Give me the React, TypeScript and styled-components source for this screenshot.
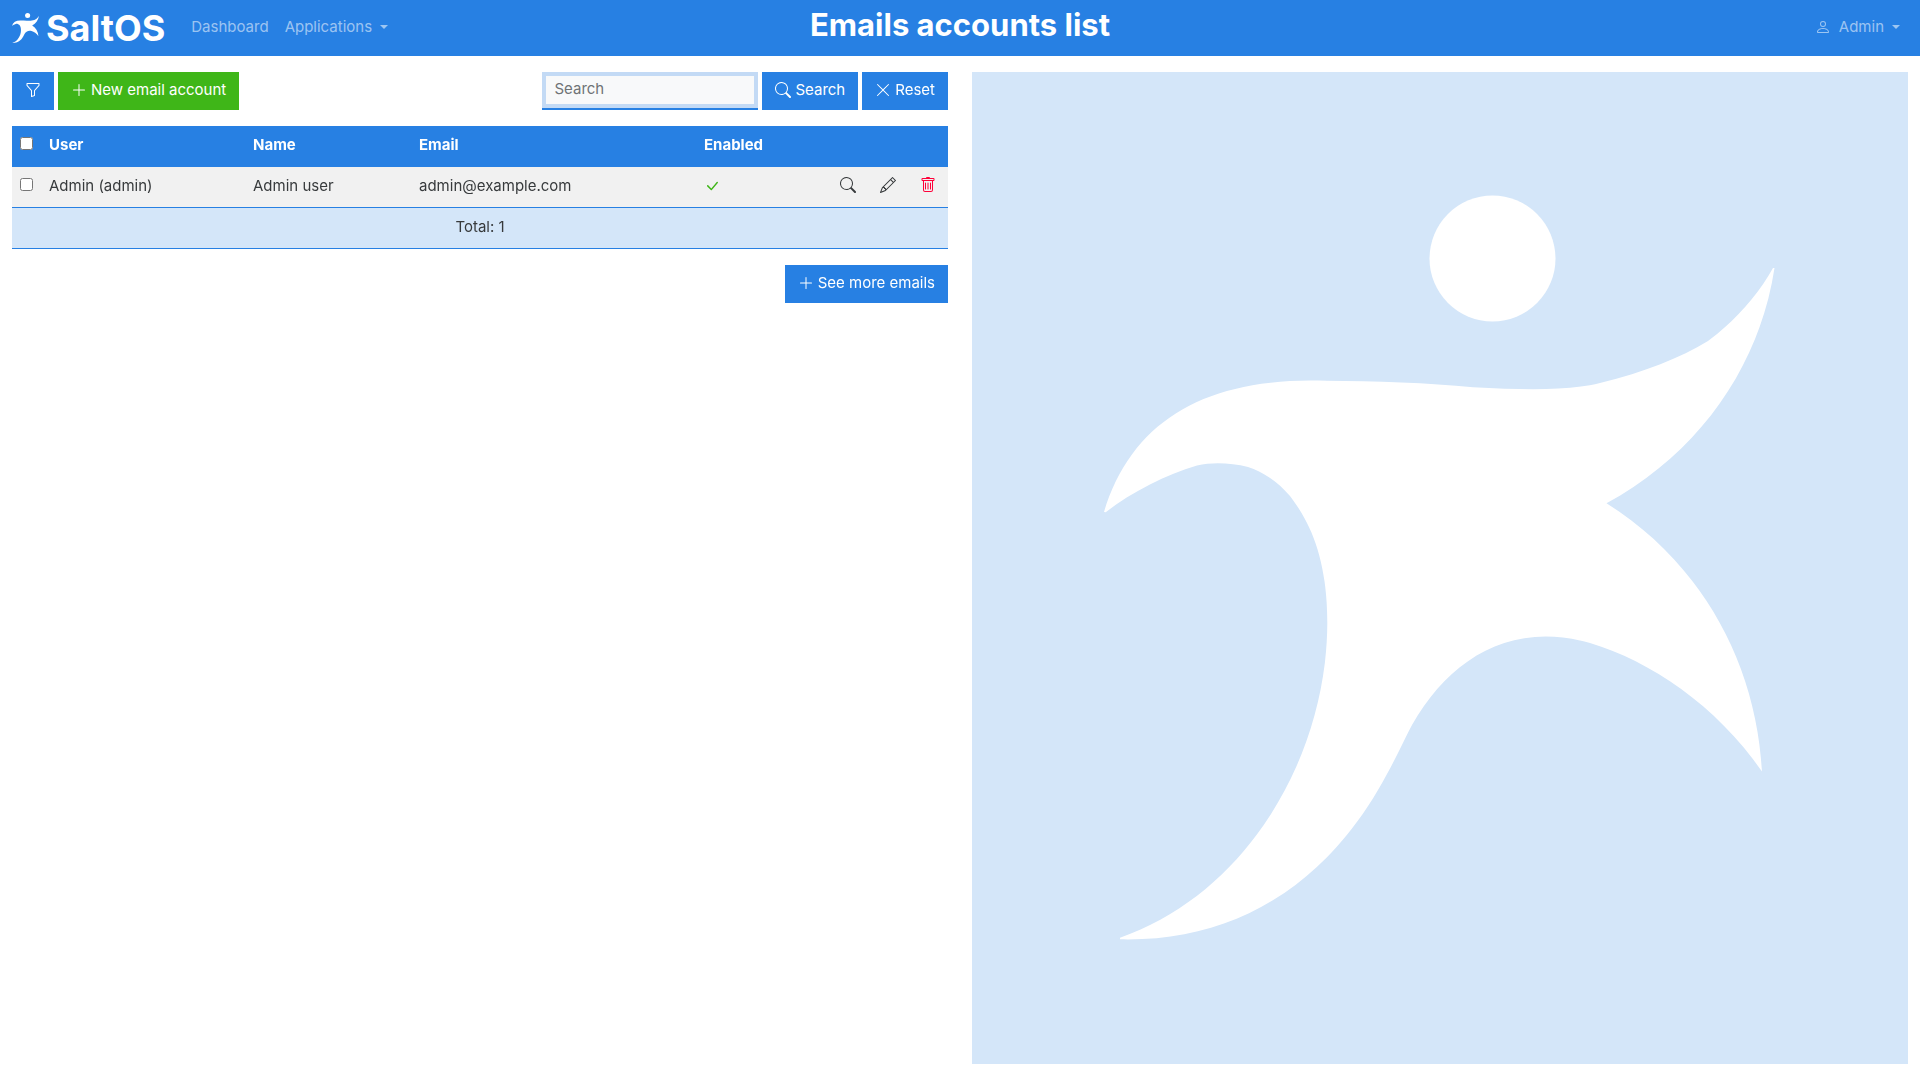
import React from "react";
import styled, { createGlobalStyle, css } from "styled-components";
import {
  BsCheckLg,
  BsFunnel,
  BsPencil,
  BsPerson,
  BsPlusLg,
  BsSearch,
  BsTrash,
  BsXLg,
} from "react-icons/bs";

const color = {
  primary: "#2780e3",
  primarySoft: "#d4e6f9",
  focusRing: "#c3daf5",
  success: "#3fb618",
  danger: "#ff0039",
  text: "#373a3c",
  muted: "#6f7376",
  stripe: "#f1f1f1",
  field: "#f8f9fa",
};

const GlobalStyle = createGlobalStyle`
  *, *::before, *::after { box-sizing: border-box; }
  body {
    margin: 0;
    background: #fff;
    color: ${color.text};
    font-family: Inter, "Liberation Sans", sans-serif;
    font-size: 15px;
    line-height: 24px;
  }
  button, input { font: inherit; }
`;

/* ---------- brand figure ---------- */

const figurePath = [
  "M1104 512",
  // left arm and shoulders, out to the right hand
  "C1131 424 1200 381 1310 380.5",
  "C1365 381 1424 382 1473 387.3",
  "C1525 390 1568 391 1600 383",
  "C1645 372 1680 358 1708 341",
  "C1736 320 1758 295 1773 268",
  "L1774.5 268",
  // underside of the right arm
  "C1760 364 1701 452 1606.5 503.3",
  // right leg
  "C1700 562 1756 661 1762 771.5",
  "C1716 705 1650 661 1590 643",
  "C1510 620 1449 660 1412 725",
  "C1404 740 1396 758 1387 774",
  // left foot
  "C1328 885 1235 942 1120 939.3",
  "L1120 937.8",
  // inner side of the left leg
  "C1250 892 1327 753 1327.3 623",
  "C1327 560 1312 525 1290 496",
  "C1277 481 1263 472 1248 467",
  "C1231 463 1213 462 1197 465.5",
  "C1166 475 1133 491 1105.7 512.3",
  "Z",
].join("");

const Figure = ({ viewBox, className }: { viewBox: string; className?: string }) => (
  <svg className={className} viewBox={viewBox} fill="#fff" aria-hidden="true">
    <circle cx="1492.5" cy="258.5" r="63" />
    <path d={figurePath} />
  </svg>
);

/* ---------- top bar ---------- */

const Navbar = styled.header`
  display: grid;
  grid-template-columns: 1fr auto 1fr;
  align-items: center;
  height: 56px;
  padding: 0 12px;
  background: ${color.primary};
`;

const NavGroup = styled.nav<{ $end?: boolean }>`
  display: flex;
  align-items: center;
  justify-content: ${(p) => (p.$end ? "flex-end" : "flex-start")};
  padding-bottom: 2px;
`;

const Brand = styled.a`
  display: flex;
  align-items: center;
  gap: 7px;
  margin-right: 18px;
  padding-top: 2px;
  color: #fff;
  font-size: 36px;
  font-weight: 700;
  line-height: 40px;
  text-decoration: none;
`;

const BrandFigure = styled(Figure)`
  width: 27px;
  height: 30px;
`;

const navItem = css`
  display: flex;
  align-items: center;
  gap: 8px;
  padding: 8px;
  border: 0;
  background: none;
  color: rgba(255, 255, 255, 0.55);
  text-decoration: none;
`;

const NavLink = styled.a`
  ${navItem}
`;

const NavMenu = styled.button`
  ${navItem}
  &::after {
    content: "";
    border: 4px solid transparent;
    border-top-color: currentColor;
    border-bottom: 0;
  }
`;

const Title = styled.h1`
  margin: 0;
  padding-bottom: 6px;
  color: #fff;
  font-size: 31px;
  font-weight: 700;
  line-height: 40px;
`;

/* ---------- page ---------- */

const Columns = styled.main`
  display: grid;
  grid-template-columns: 1fr 1fr;
  gap: 24px;
  min-height: calc(100vh - 56px);
  padding: 16px 12px;
`;

const ListPane = styled.section`
  display: flex;
  flex-direction: column;
  gap: 16px;
`;

const PreviewPane = styled.aside`
  display: flex;
  background: ${color.primarySoft};
`;

const PreviewFigure = styled(Figure)`
  width: 100%;
`;

const Toolbar = styled.div<{ $end?: boolean }>`
  display: flex;
  gap: 4px;
  justify-content: ${(p) => (p.$end ? "flex-end" : "space-between")};
`;

const ButtonGroup = styled.div`
  display: flex;
  gap: 4px;
`;

const SearchForm = styled.form`
  display: flex;
  gap: 4px;
`;

const Button = styled.button<{ $tone?: "primary" | "success" }>`
  display: flex;
  align-items: center;
  justify-content: center;
  gap: 4px;
  height: 38px;
  padding: 0 13px 2px;
  border: 0;
  background: ${(p) => color[p.$tone ?? "primary"]};
  color: #fff;
  white-space: nowrap;

  svg {
    width: 16px;
    height: 16px;
  }
`;

const SearchInput = styled.input`
  width: 216px;
  height: 38px;
  padding: 4px 12px 8px;
  border: 0;
  border-bottom: 2px solid ${color.primary};
  background: ${color.field};
  color: ${color.text};
  outline: 0;

  &::placeholder {
    color: ${color.muted};
    opacity: 1;
  }
  &:focus {
    box-shadow: inset 0 0 0 4px ${color.focusRing};
  }
`;

const Table = styled.table`
  width: 100%;
  border-collapse: separate;
  border-spacing: 0;
  table-layout: fixed;
`;

const Col = styled.col<{ $width?: number }>`
  width: ${(p) => (p.$width ? `${p.$width}px` : "auto")};
`;

const cell = css`
  height: 41px;
  padding: 7px 8px 9px;
  border-bottom: 1px solid ${color.primary};
  text-align: left;
`;

const HeadCell = styled.th`
  ${cell}
  background: ${color.primary};
  color: #fff;
  font-weight: 700;
`;

const Cell = styled.td`
  ${cell}
  background: ${color.stripe};
`;

const TotalCell = styled.td`
  ${cell}
  background: ${color.primarySoft};
  text-align: center;
`;

const ActionsCell = styled(Cell)`
  padding: 0;
`;

const Checkbox = styled.input`
  display: block;
  width: 13px;
  height: 13px;
  margin: 0 0 4px;
`;

const EnabledMark = styled(BsCheckLg)`
  display: block;
  width: 16px;
  height: 16px;
  color: ${color.success};
`;

const Actions = styled.div`
  display: flex;
  padding-bottom: 5px;
`;

const IconButton = styled.button<{ $danger?: boolean }>`
  display: flex;
  padding: 8px 12px;
  border: 0;
  background: none;
  color: ${(p) => (p.$danger ? color.danger : color.text)};

  svg {
    width: 16px;
    height: 16px;
  }
`;

const accounts = [{ user: "Admin (admin)", name: "Admin user", email: "admin@example.com", enabled: true }];

export default function App() {
  return (
    <>
      <GlobalStyle />
      <Navbar>
        <NavGroup>
          <Brand href="#">
            <BrandFigure viewBox="1104 195 672 746" />
            SaltOS
          </Brand>
          <NavLink href="#dashboard">Dashboard</NavLink>
          <NavMenu type="button">Applications</NavMenu>
        </NavGroup>
        <Title>Emails accounts list</Title>
        <NavGroup $end>
          <NavMenu type="button">
            <BsPerson size={16} />
            Admin
          </NavMenu>
        </NavGroup>
      </Navbar>

      <Columns>
        <ListPane>
          <Toolbar>
            <ButtonGroup>
              <Button type="button" aria-label="Filter">
                <BsFunnel />
              </Button>
              <Button type="button" $tone="success">
                <BsPlusLg />
                New email account
              </Button>
            </ButtonGroup>
            <SearchForm onSubmit={(e) => e.preventDefault()}>
              <SearchInput type="text" placeholder="Search" aria-label="Search" autoFocus />
              <Button type="submit">
                <BsSearch />
                Search
              </Button>
              <Button type="reset">
                <BsXLg />
                Reset
              </Button>
            </SearchForm>
          </Toolbar>

          <Table>
            <colgroup>
              <Col $width={29} />
              <Col $width={204} />
              <Col $width={166} />
              <Col />
              <Col $width={132} />
              <Col $width={120} />
            </colgroup>
            <thead>
              <tr>
                <HeadCell>
                  <Checkbox type="checkbox" aria-label="Select all" />
                </HeadCell>
                <HeadCell>User</HeadCell>
                <HeadCell>Name</HeadCell>
                <HeadCell>Email</HeadCell>
                <HeadCell>Enabled</HeadCell>
                <HeadCell />
              </tr>
            </thead>
            <tbody>
              {accounts.map((a) => (
                <tr key={a.email}>
                  <Cell>
                    <Checkbox type="checkbox" aria-label={`Select ${a.user}`} />
                  </Cell>
                  <Cell>{a.user}</Cell>
                  <Cell>{a.name}</Cell>
                  <Cell>{a.email}</Cell>
                  <Cell>{a.enabled && <EnabledMark />}</Cell>
                  <ActionsCell>
                    <Actions>
                      <IconButton type="button" aria-label="View">
                        <BsSearch />
                      </IconButton>
                      <IconButton type="button" aria-label="Edit">
                        <BsPencil />
                      </IconButton>
                      <IconButton type="button" aria-label="Delete" $danger>
                        <BsTrash />
                      </IconButton>
                    </Actions>
                  </ActionsCell>
                </tr>
              ))}
            </tbody>
            <tfoot>
              <tr>
                <TotalCell colSpan={6}>Total: {accounts.length}</TotalCell>
              </tr>
            </tfoot>
          </Table>

          <Toolbar $end>
            <Button type="button">
              <BsPlusLg />
              See more emails
            </Button>
          </Toolbar>
        </ListPane>

        <PreviewPane>
          <PreviewFigure viewBox="972 72 936 992" />
        </PreviewPane>
      </Columns>
    </>
  );
}
